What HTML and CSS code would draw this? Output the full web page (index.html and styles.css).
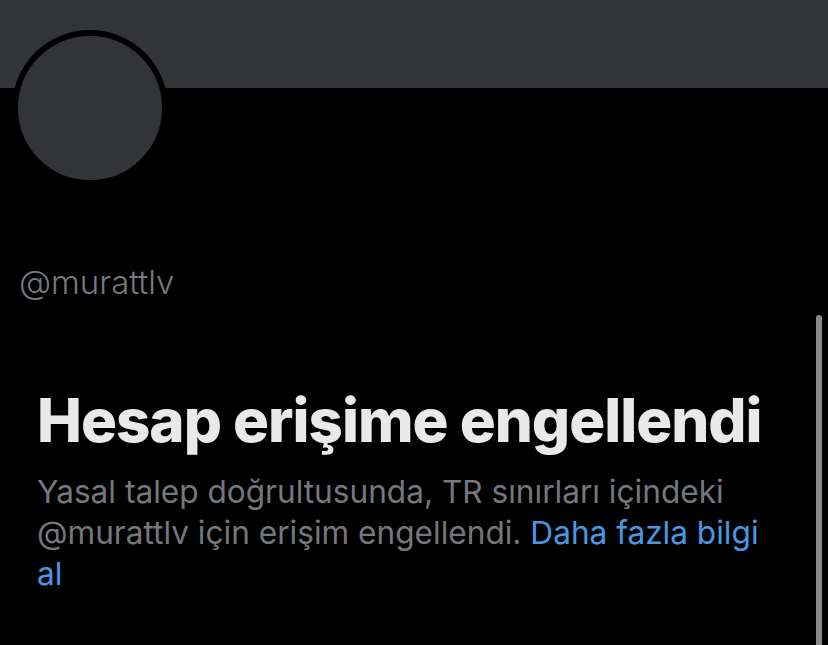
FILE: index.html
```html
<!DOCTYPE html>
<html lang="tr">
<head>
<meta charset="utf-8">
<title>@murattlv</title>
<link rel="stylesheet" href="styles.css">
</head>
<body>
<div class="page">
  <div class="banner"></div>
  <div class="avatar"></div>
  <div class="handle">@murattlv</div>
  <div class="notice">
    <h1 class="title">Hesap erişime engellendi</h1>
    <p class="desc">Yasal talep doğrultusunda, TR sınırları içindeki @murattlv için erişim engellendi. <a class="link" href="#">Daha fazla bilgi al</a></p>
  </div>
  <div class="scrollbar"></div>
</div>
</body>
</html>
```
FILE: styles.css
```css
html, body {
  margin: 0;
  padding: 0;
  background: #000;
}
.page {
  width: 828px;
  height: 645px;
  overflow: hidden;
  background: #000;
  font-family: Inter, "Liberation Sans", sans-serif;
}
.banner {
  height: 88px;
  background: #333438;
}
.avatar {
  box-sizing: border-box;
  width: 156px;
  height: 156px;
  margin: -58px 0 0 12px;
  border: 6px solid #000;
  border-radius: 50%;
  background: #333438;
}
.handle {
  margin: 76px 0 0 19px;
  font-size: 33px;
  line-height: 40px;
  font-weight: 300;
  color: #76797d;
}
.notice {
  margin-top: 82px;
  padding: 0 62px 0 37px;
}
.title {
  margin: 0;
  font-size: 60px;
  line-height: 72px;
  font-weight: 800;
  color: #e7e9ea;
  letter-spacing: -1px;
}
.desc {
  margin: 15px 0 0;
  font-size: 31.6px;
  line-height: 41px;
  color: #74777b;
}
.link {
  color: #4a98e3;
  text-decoration: none;
}
.scrollbar {
  position: absolute;
  left: 816px;
  top: 315px;
  width: 6px;
  height: 340px;
  border-radius: 3px;
  background: #8a8a8a;
}
```
